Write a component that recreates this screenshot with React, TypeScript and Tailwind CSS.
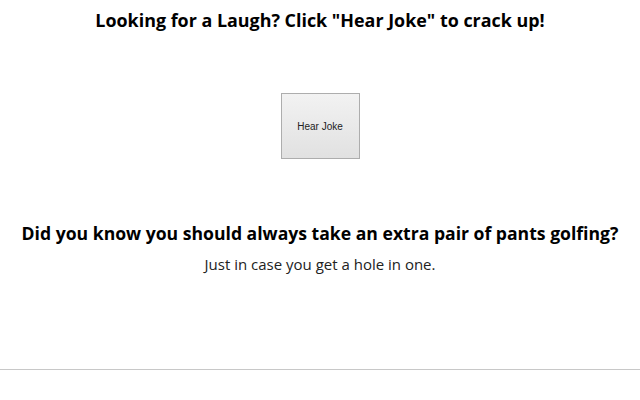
export default function App() {
  return (
    <div className="flex h-[400px] w-[640px] flex-col bg-white font-['Open_Sans',sans-serif] text-black">
      <h1 className="pt-[10px] text-center text-[17.9px] leading-[20px] font-bold">
        Looking for a Laugh? Click "Hear Joke" to crack up!
      </h1>
      <div className="mt-[63px] flex justify-center">
        <button className="h-[66px] w-[79px] border border-[#adadad] bg-gradient-to-b from-[#f2f2f2] to-[#e1e1e1] font-['Liberation_Sans',sans-serif] text-[10px] text-[#222]">
          Hear Joke
        </button>
      </div>
      <h2 className="mt-[64px] text-center text-[17.6px] leading-[20px] font-bold">
        Did you know you should always take an extra pair of pants golfing?
      </h2>
      <p className="mt-[12px] text-center text-[15px] leading-[18px] text-[#222]">
        Just in case you get a hole in one.
      </p>
      <div className="mt-auto mb-[30px] h-px w-full bg-[#c8c8c8]" />
    </div>
  );
}
